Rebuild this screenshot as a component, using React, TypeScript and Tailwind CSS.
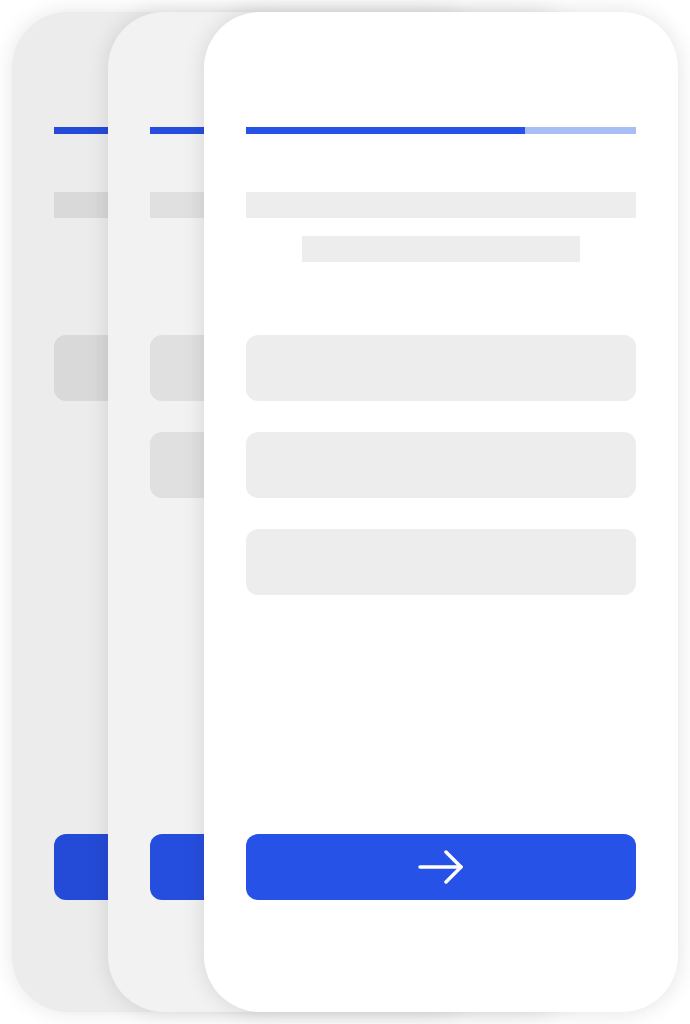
import React from "react";

type Tone = {
  bg: string;
  block: string;
  blue: string;
  light: string;
  shadow: string;
};

const tones: Record<"back" | "middle" | "front", Tone> = {
  back: {
    bg: "bg-[#ececec]",
    block: "bg-[#d9d9d9]",
    blue: "bg-[#244bd7]",
    light: "bg-[#9fb2e6]",
    shadow: "shadow-[0_0_22px_rgba(0,0,0,0.10)]",
  },
  middle: {
    bg: "bg-[#f2f2f2]",
    block: "bg-[#e0e0e0]",
    blue: "bg-[#264ede]",
    light: "bg-[#a4b8ee]",
    shadow: "shadow-[0_0_22px_rgba(0,0,0,0.12)]",
  },
  front: {
    bg: "bg-white",
    block: "bg-[#ededed]",
    blue: "bg-[#2752e7]",
    light: "bg-[#a8bdf4]",
    shadow: "shadow-[0_0_22px_rgba(0,0,0,0.12)]",
  },
};

const ArrowIcon = () => (
  <svg width="46" height="34" viewBox="0 0 46 34" fill="none">
    <path d="M2 17H43" stroke="white" strokeWidth="3.5" strokeLinecap="round" />
    <path
      d="M28 2L43 17L28 32"
      stroke="white"
      strokeWidth="3.5"
      strokeLinecap="round"
      strokeLinejoin="round"
    />
  </svg>
);

const Card = ({
  tone,
  fields,
  offset,
}: {
  tone: Tone;
  fields: number;
  offset: string;
}) => {
  return (
    <div
      className={`col-start-1 row-start-1 w-[474px] h-[1000px] rounded-[56px] ${tone.bg} ${tone.shadow} ${offset} flex flex-col px-[42px] pt-[115px] pb-[112px]`}
    >
      {/* progress */}
      <div className="flex h-[7px]">
        <div className={`w-[279px] ${tone.blue}`} />
        <div className={`flex-1 ${tone.light}`} />
      </div>

      {/* title lines */}
      <div className={`mt-[58px] h-[26px] ${tone.block}`} />
      <div className={`mt-[18px] mx-[56px] h-[26px] ${tone.block}`} />

      {/* fields */}
      <div className="mt-[73px] flex flex-col gap-[31px]">
        {Array.from({ length: fields }).map((_, i) => (
          <div key={i} className={`h-[66px] rounded-[12px] ${tone.block}`} />
        ))}
      </div>

      {/* next button */}
      <div
        className={`mt-auto h-[66px] rounded-[12px] ${tone.blue} flex items-center justify-center`}
      >
        <ArrowIcon />
      </div>
    </div>
  );
};

export default function App() {
  return (
    <div className="w-[690px] h-[1024px] bg-white overflow-hidden">
      <div className="grid pt-[12px]">
        <Card tone={tones.back} fields={1} offset="ml-[12px]" />
        <Card tone={tones.middle} fields={2} offset="ml-[108px]" />
        <Card tone={tones.front} fields={3} offset="ml-[204px]" />
      </div>
    </div>
  );
}
